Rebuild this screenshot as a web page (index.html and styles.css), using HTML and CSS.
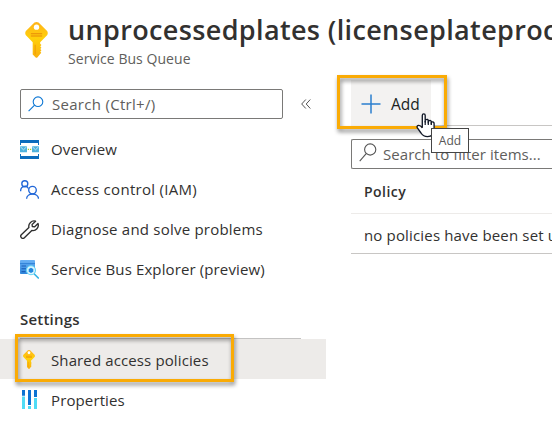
FILE: index.html
```html
<!DOCTYPE html>
<html lang="en">
<head>
<meta charset="utf-8">
<title>Shared access policies</title>
<link rel="stylesheet" href="styles.css">
</head>
<body>
<svg width="0" height="0" class="defs" aria-hidden="true">
  <defs>
    <linearGradient id="gold" x1="0" y1="0" x2="0" y2="1"><stop offset="0" stop-color="#ffb31a"/><stop offset=".45" stop-color="#ffd00a"/><stop offset="1" stop-color="#f9b010"/></linearGradient>
    <linearGradient id="win" x1="0" y1="0" x2="0" y2="1"><stop offset="0" stop-color="#6bb2f5"/><stop offset="1" stop-color="#2f86dc"/></linearGradient>
    <symbol id="key" viewBox="0 0 22 35">
      <path fill="url(#gold)" d="M9 .6Q11 -.5 13 .6L21.3 8.8Q22.6 11 21.3 13L14.6 19.7V21.2L15.8 22.4L14.7 23.8L15.8 25L14.7 26.2L15.8 27.5L14.7 28.8L15.6 30L11.8 34.5Q11 35.2 10.2 34.5L7.3 31.5V19.7L.7 13Q-.6 11 .7 8.8Z"/>
      <circle cx="11" cy="5" r="2.6" fill="#fff"/>
      <path d="M5.5 11.5H16.5M5.5 13.6H16.5" stroke="#e88a08" stroke-width="1"/>
      <path d="M9.7 22V31.5" stroke="#ef9b08" stroke-width="1"/>
    </symbol>
  </defs>
</svg>
<header class="header">
  <svg class="header-icon"><use href="#key"/></svg>
  <div class="titles">
    <h1>unprocessedplates (licenseplateproc</h1>
    <p>Service Bus Queue</p>
  </div>
</header>
<div class="columns">
  <nav class="sidebar">
    <div class="search-row">
      <div class="search">
        <svg width="16" height="16" viewBox="0 0 16 16" fill="none" stroke="#0f78d4" stroke-width="1.1"><circle cx="10" cy="5.7" r="4.8"/><path d="M6.6 9.2L.6 15.2"/></svg>
        <span>Search (Ctrl+/)</span>
      </div>
      <svg class="collapse" width="10" height="10" viewBox="0 0 10 10" fill="none" stroke="#555" stroke-width="1"><path d="M4.8 .5L.7 5L4.8 9.5M9.3 .5L5.2 5L9.3 9.5"/></svg>
    </div>
    <ul>
      <li>
        <svg viewBox="0 0 19 19"><path fill="#0c6cbd" d="M0 0H19V5H18V3H1V5H0ZM0 14H1V16H18V14H19V19H0Z"/><path fill="#50b1dc" d="M0 6.3H7V12.3H0ZM12 6.3H19V12.3H12Z"/><path d="M.4 6.8L3.5 9.8L6.6 6.8M12.4 6.8L15.5 9.8L18.6 6.8" fill="none" stroke="#c8effa" stroke-width=".9"/><path stroke="#a8cd25" stroke-width="1.3" d="M7.8 9.4H9M10 9.4H11.2"/></svg>
        <span>Overview</span>
      </li>
      <li>
        <svg viewBox="0 0 19 19" fill="none" stroke="#2167d8" stroke-width="1.35"><circle cx="4.8" cy="3.7" r="3"/><circle cx="12.5" cy="10.1" r="3.8"/><path d="M.6 11.2C.7 5.2 7.3 5.2 8.5 8.6M6.6 18.8C6.8 12.4 18.2 12.4 18.5 18.8"/></svg>
        <span class="access">Access control (IAM)</span>
      </li>
      <li>
        <svg viewBox="0 0 19 19" fill="none" stroke="#2f2f2f" stroke-width="1.35" stroke-linejoin="round"><path d="M15.6 1.2A5.3 5.3 0 0 0 8.9 7.4L1.3 14.7A2.2 2.2 0 0 0 4.4 17.8L11.8 10.4A5.3 5.3 0 0 0 18 3.5L14.7 6.8L12.3 6.5L12.1 4.4Z"/></svg>
        <span class="diagnose">Diagnose and solve problems</span>
      </li>
      <li>
        <svg viewBox="0 0 19 19"><rect y="0" width="15" height="14" rx=".8" fill="url(#win)"/><path d="M0 3.6H15" stroke="#2578cf" stroke-width=".8"/><path d="M1.5 6H6M1.5 8.8H6M1.5 11.6H5.5" stroke="#1a5fb8" stroke-width="1.1"/><path d="M14.3 14L18.3 18" stroke="#35b4e6" stroke-width="1.7" stroke-linecap="round"/><circle cx="11" cy="10.3" r="4.5" fill="#ddf6ff" stroke="#62d3f4" stroke-width="1.1"/><path d="M11 7.7L13.3 9V11.7L11 13L8.7 11.7V9Z" fill="#2388df"/></svg>
        <span>Service Bus Explorer (preview)</span>
      </li>
    </ul>
    <h2>Settings</h2>
    <ul class="settings">
      <li class="selected">
        <svg class="small-key"><use href="#key"/></svg>
        <span>Shared access policies</span>
        <div class="highlight highlight-policy"></div>
      </li>
      <li>
        <svg viewBox="0 0 19 19"><path fill="#50dcf5" d="M2 6.5H5V19H2ZM8 16H11V19H8ZM14 8H17V19H14Z"/><path fill="#0c73d3" d="M2 0H5V5.8H2ZM8 0H11V15H8ZM14 0H17V7H14Z"/></svg>
        <span>Properties</span>
      </li>
    </ul>
  </nav>
  <main class="content">
    <div class="toolbar">
      <button class="add">
        <svg width="20" height="20" viewBox="0 0 20 20" stroke="#2b7fce" stroke-width="1.5"><path d="M10 .5V19.5M.5 10H19.5"/></svg>
        <span>Add</span>
      </button>
      <div class="highlight highlight-add"></div>
      <svg class="cursor" width="20" height="25" viewBox="0 0 20 25"><path fill="#fff" stroke="#111827" stroke-width="1.35" stroke-linejoin="round" d="M6.3 14.5V2.6Q6.3 .9 7.8 .9Q9.2 .9 9.2 2.6V9V7Q12.3 5.4 12.3 8.2V10V8Q15.3 6.7 15.3 9.1V11V9.2Q18.1 8.2 18.1 10.8V16.5Q18.1 23.6 11.5 23.6Q7.4 23.6 5 20L1.2 14.7Q.5 12.6 2.6 12.4Q4.6 12.3 6.3 15"/><path stroke="#111827" stroke-width="1.2" d="M9.2 8V12M12.3 8.2V12M15.3 9.2V12"/></svg>
      <div class="tooltip">Add</div>
    </div>
    <div class="filter">
      <svg width="18" height="19" viewBox="0 0 18 19" fill="none" stroke="#555" stroke-width="1.1"><circle cx="11.2" cy="6.5" r="5.6"/><path d="M7.2 10.7L.7 18.2"/></svg>
      <span>Search to filter items...</span>
    </div>
    <div class="row head"><span>Policy</span></div>
    <div class="row"><span>no policies have been set u</span></div>
  </main>
</div>
</body>
</html>
```

FILE: styles.css
```css
* { box-sizing: border-box; }
body {
  margin: 0;
  width: 552px;
  height: 425px;
  overflow: hidden;
  background: #fff;
  color: #323130;
  font: 15px/20px "Open Sans", "Noto Sans", sans-serif;
  white-space: nowrap;
}
.defs { position: absolute; }
h1, h2, p, ul { margin: 0; padding: 0; }
ul { list-style: none; }
svg { flex: none; }
.header { display: flex; height: 80px; padding: 12px 0 0 25px; overflow: hidden; }
.header-icon { width: 23px; height: 36px; margin: 10px 20px 0 0; }
.titles { min-width: 0; }
h1 { font-size: 27px; line-height: 36px; font-weight: 600; letter-spacing: .36px; }
.titles p { margin-top: 1px; font-size: 14px; line-height: 20px; letter-spacing: .05px; color: #605e5c; }
.columns { display: flex; }
.sidebar { width: 326px; margin-right: 25px; flex: none; }
.search-row { display: flex; align-items: center; padding: 9px 0 0 20px; }
.search {
  display: flex;
  align-items: center;
  width: 263px;
  height: 30px;
  padding-left: 7px;
  border: 1px solid #7a7977;
  border-radius: 2px;
  color: #605e5c;
  letter-spacing: .29px;
}
.search svg { margin-right: 8px; }
.collapse { margin-left: 18px; }
.sidebar ul { padding-top: 10px; }
.sidebar li { display: flex; align-items: center; height: 40px; padding-left: 20px; letter-spacing: .12px; }
.sidebar .access { letter-spacing: .3px; }
.sidebar .diagnose { letter-spacing: .22px; }
.sidebar li > svg { width: 19px; height: 19px; margin-right: 12px; }
h2 { padding: 20px 0 8px 20px; margin-bottom: 2px; font-size: 15px; line-height: 20px; font-weight: 600; letter-spacing: .2px; }
.sidebar ul.settings { padding-top: 0; }
.sidebar .settings li { padding-top: 1px; }
.sidebar li.selected { position: relative; background: #edebe9; }
.selected::before {
  content: "";
  position: absolute;
  left: 20px;
  top: -1px;
  width: 281px;
  height: 1px;
  background: #c4c3c2;
}
.sidebar li > .small-key { width: 12px; height: 19px; margin: 0 16px 0 3px; }
.highlight { position: absolute; border: 3px solid #faab05; filter: drop-shadow(1px 3px 2px rgba(0, 0, 0, .48)); }
.highlight-policy { left: 15px; top: -5px; width: 219px; height: 48px; }
.content { flex: 1; min-width: 0; }
.toolbar { position: relative; height: 46px; border-bottom: 1px solid #c8c6c4; }
.add {
  display: flex;
  align-items: center;
  width: 80px;
  height: 46px;
  padding: 2px 0 0 10px;
  border: 0;
  background: #f3f2f1;
  color: #201f1e;
  font: inherit;
  font-size: 15.5px;
}
.add svg { margin-right: 10px; }
.highlight-add { left: -14px; top: -5px; width: 110px; height: 54px; }
.cursor { position: absolute; left: 65px; top: 33px; z-index: 2; }
.tooltip {
  position: absolute;
  left: 80px;
  top: 48px;
  z-index: 3;
  width: 38px;
  height: 25px;
  border: 1px solid #454545;
  background: #fff;
  color: #575757;
  font-size: 12px;
  line-height: 24px;
  text-align: center;
}
.filter {
  display: flex;
  align-items: center;
  width: 210px;
  height: 30px;
  margin-top: 13px;
  padding-left: 7px;
  border: 1px solid #7a7977;
  border-right: 0;
  border-radius: 2px 0 0 2px;
  color: #605e5c;
  letter-spacing: .05px;
}
.content .filter, .row { width: 100%; }
.filter svg { margin: -3px 6px 0 0; }
.row { height: 40px; padding: 11px 0 0 13px; border-bottom: 1px solid #c8c6c4; overflow: hidden; letter-spacing: .16px; }
.row.head { height: 45px; padding-top: 13px; border-color: #edebe9; font-size: 14px; font-weight: 600; letter-spacing: .45px; }
```
